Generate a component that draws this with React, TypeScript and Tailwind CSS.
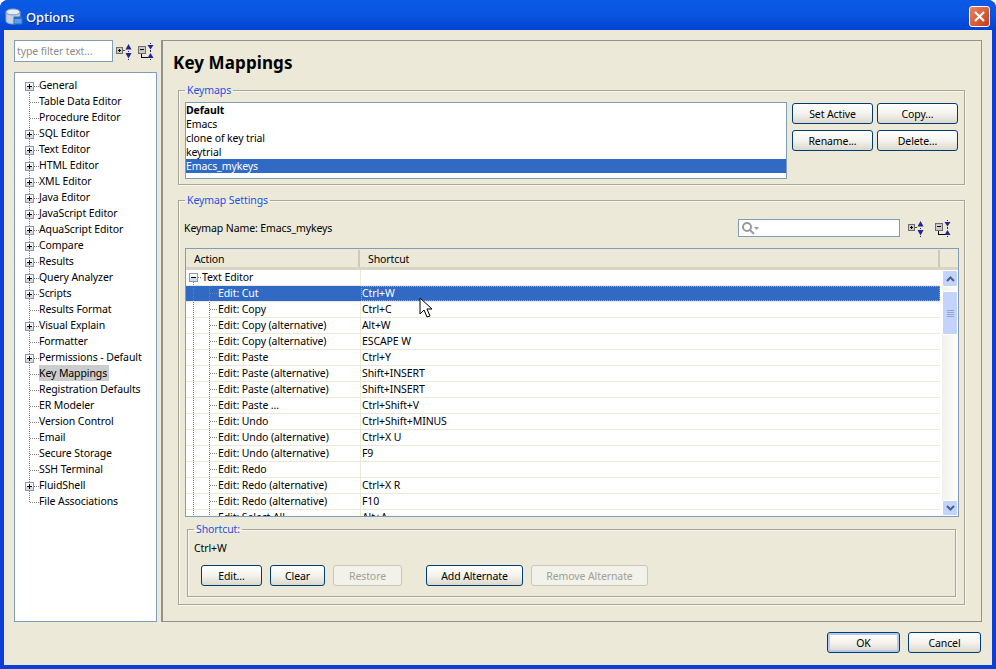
import React from 'react';

const treeItems: [string, boolean][] = [
  ['General', true],
  ['Table Data Editor', false],
  ['Procedure Editor', false],
  ['SQL Editor', true],
  ['Text Editor', true],
  ['HTML Editor', true],
  ['XML Editor', true],
  ['Java Editor', true],
  ['JavaScript Editor', true],
  ['AquaScript Editor', true],
  ['Compare', true],
  ['Results', true],
  ['Query Analyzer', true],
  ['Scripts', true],
  ['Results Format', false],
  ['Visual Explain', true],
  ['Formatter', false],
  ['Permissions - Default', true],
  ['Key Mappings', false],
  ['Registration Defaults', false],
  ['ER Modeler', false],
  ['Version Control', false],
  ['Email', false],
  ['Secure Storage', false],
  ['SSH Terminal', false],
  ['FluidShell', true],
  ['File Associations', false],
];

const rows: [string, string][] = [
  ['Edit: Cut', 'Ctrl+W'],
  ['Edit: Copy', 'Ctrl+C'],
  ['Edit: Copy (alternative)', 'Alt+W'],
  ['Edit: Copy (alternative)', 'ESCAPE W'],
  ['Edit: Paste', 'Ctrl+Y'],
  ['Edit: Paste (alternative)', 'Shift+INSERT'],
  ['Edit: Paste (alternative)', 'Shift+INSERT'],
  ['Edit: Paste ...', 'Ctrl+Shift+V'],
  ['Edit: Undo', 'Ctrl+Shift+MINUS'],
  ['Edit: Undo (alternative)', 'Ctrl+X U'],
  ['Edit: Undo (alternative)', 'F9'],
  ['Edit: Redo', ''],
  ['Edit: Redo (alternative)', 'Ctrl+X R'],
  ['Edit: Redo (alternative)', 'F10'],
  ['Edit: Select All', 'Alt+A'],
];

const ExpanderBox = ({ x, y, open }: { x: number; y: number; open: boolean }) => (
  <g shapeRendering="crispEdges">
    <rect x={x + 0.5} y={y + 0.5} width="8" height="8" fill="#d5dbe3" stroke="#7f9db9" />
    <rect x={x + 1} y={y + 1} width="7" height="4" fill="#f7f8fa" />
    <rect x={x + 2} y={y + 4} width="5" height="1" fill="#000" />
    {!open && <rect x={x + 4} y={y + 2} width="1" height="5" fill="#000" />}
  </g>
);

const SideGutter = ({ expandable, first, last }: { expandable: boolean; first: boolean; last: boolean }) => (
  <svg width="24" height="16" className="shrink-0">
    <g stroke="#808080" strokeDasharray="1 1" shapeRendering="crispEdges">
      <line x1="14.5" y1={first ? 9 : 0} x2="14.5" y2={last ? 9 : 16} />
      <line x1="15" y1="9.5" x2="24" y2="9.500" />
    </g>
    {expandable && <ExpanderBox x={10} y={5} open={false} />}
  </svg>
);

const ActionGutter = ({ root }: { root?: boolean }) => (
  <svg width="32" height="16" className="shrink-0">
    <g stroke="#808080" strokeDasharray="1 1" shapeRendering="crispEdges">
      {root ? (
        <>
          <line x1="7.5" y1="8" x2="7.5" y2="16" />
          <line x1="8" y1="7.5" x2="16" y2="7.500" />
        </>
      ) : (
        <>
          <line x1="7.5" y1="0" x2="7.5" y2="16" />
          <line x1="23.5" y1="0" x2="23.5" y2="16" />
          <line x1="24" y1="7.5" x2="32" y2="7.500" />
        </>
      )}
    </g>
    {root && <ExpanderBox x={3} y={3} open />}
  </svg>
);

const ExpandAllIcon = () => (
  <svg width="18" height="18" viewBox="0 0 18 18" className="shrink-0">
    <g shapeRendering="crispEdges">
      <rect x="0.5" y="5.5" width="6" height="6" fill="#c8c8c8" stroke="#6e6e6e" />
      <rect x="2" y="8" width="3" height="1" fill="#000" />
      <rect x="3" y="7" width="1" height="3" fill="#000" />
      <rect x="7" y="8" width="2" height="1" fill="#444" />
      <rect x="12" y="9" width="1" height="1" fill="#23238e" />
      <rect x="12" y="17" width="1" height="1" fill="#23238e" />
    </g>
    <path d="M12.5 2L15.500 7.500H9.500z" fill="#23238e" />
    <path d="M9.500 11H15.500L12.500 16.500z" fill="#23238e" />
  </svg>
);

const CollapseAllIcon = () => (
  <svg width="18" height="18" viewBox="0 0 18 18" className="shrink-0">
    <g shapeRendering="crispEdges">
      <rect x="0.5" y="4.5" width="7" height="7" fill="#c8c8c8" stroke="#6e6e6e" />
      <rect x="2" y="7" width="4" height="1" fill="#000" />
      <path d="M3 12h1v3h6v1H3z" fill="#000" />
      <rect x="12" y="1" width="1" height="1" fill="#23238e" />
      <rect x="12" y="8" width="1" height="2" fill="#23238e" />
      <rect x="12" y="17" width="1" height="1" fill="#23238e" />
    </g>
    <path d="M9.500 3H15.500L12.500 7.500z" fill="#23238e" />
    <path d="M12.500 11L15.500 16H9.500z" fill="#23238e" />
  </svg>
);

const XpButton = ({ label, w, disabled, focus }: { label: string; w: string; disabled?: boolean; focus?: boolean }) => (
  <div
    className={`${w} h-[21px] flex items-center justify-center rounded-[3px] border ${
      disabled
        ? 'border-[#c9c7ba] bg-[#f2f1ea] text-[#a1a192]'
        : focus
          ? 'border-[#003c74] bg-gradient-to-b from-white via-[#f4f3ee] to-[#dcd8cc] text-black shadow-[inset_0_0_0_2px_#b4c8f0]'
          : 'border-[#003c74] bg-gradient-to-b from-white via-[#f4f3ee] to-[#dcd8cc] text-black'
    }`}
  >
    {label}
  </div>
);

const legendClass = 'ml-[6px] px-[2px] h-[14px] leading-[14px] text-[#1e50e0]';
const fieldsetClass = 'border border-[#a5a598] shadow-[inset_1px_1px_0_#f8f7f2,1px_1px_0_#f8f7f2]';

const App = () => {
  return (
    <div
      className="relative w-[996px] h-[669px] flex flex-col overflow-hidden rounded-t-lg bg-[#0a3fd8] text-[10.5px] leading-[14px] tracking-[-0.1px] text-black"
      style={{ fontFamily: '"Noto Sans", "DejaVu Sans", sans-serif' }}
    >
      {/* Title bar */}
      <div className="h-[30px] shrink-0 flex items-center pl-[5px] pr-[6px] bg-gradient-to-b from-[#0a5ae6] via-[#0a55e0] to-[#0342d0]">
        <svg width="18" height="18" viewBox="0 0 18 18" className="shrink-0 mt-[3px]">
          <ellipse cx="8" cy="4" rx="7" ry="3" fill="#e8eef8" stroke="#8da2c6" />
          <path d="M1 4v9c0 1.600 3 3 7 3s7-1.400 7-3V4c0 1.600-3 3-7 3S1 5.600 1 4z" fill="#c4d0e4" stroke="#8da2c6" />
          <rect x="9" y="9" width="8" height="7" fill="#5d9ee8" stroke="#2b6cc0" />
          <rect x="9" y="9" width="8" height="2" fill="#2b6cc0" />
        </svg>
        <span className="ml-[3px] mt-[4px] text-[13px] font-medium text-white [text-shadow:1px_1px_0_#0a2a90]">Options</span>
        <div className="ml-auto mt-[3px] w-[21px] h-[21px] rounded-[3px] border border-white bg-gradient-to-br from-[#e8835f] to-[#c63a12] flex items-center justify-center">
          <svg width="13" height="13" viewBox="0 0 13 13">
            <path d="M2 2l9 9M11 2l-9 9" stroke="#fff" strokeWidth="2.200" />
          </svg>
        </div>
      </div>

      {/* Dialog body */}
      <div className="mx-[4px] mb-[4px] flex-1 flex flex-col bg-[#ece9d8] min-h-0">
        <div className="flex pl-[10px] pt-[10px] gap-[4px]">
          {/* Left column */}
          <div className="w-[143px] shrink-0 flex flex-col">
            <div className="flex items-center h-[22px]">
              <div className="w-[99px] h-[22px] border border-[#7f9db9] bg-white pl-[2px] flex items-center text-[#8c8c8c]">
                type filter text...
              </div>
              <div className="ml-[3px]"><ExpandAllIcon /></div>
              <div className="ml-[4px]"><CollapseAllIcon /></div>
            </div>
            <div className="mt-[10px] h-[550px] border border-[#7f9db9] bg-white pt-[4px]">
              {treeItems.map(([name, expandable], i) => (
                <div key={name} className="h-[16px] flex items-center">
                  <SideGutter expandable={expandable} first={i === 0} last={i === treeItems.length - 1} />
                  <span className={name === 'Key Mappings' ? 'bg-[#cccccc] h-[16px] leading-[16px] pr-[2px]' : ''}>{name}</span>
                </div>
              ))}
            </div>
          </div>

          {/* Right panel */}
          <div className="w-[821px] h-[582px] border border-[#919191] border-l-2 px-[15px] shrink-0">
            <div className="h-[42px] pt-[11px] text-[17px] leading-[22px] tracking-[0.1px] font-bold -ml-[5px]">Key Mappings</div>

            <fieldset className={`${fieldsetClass} h-[102px] w-[787px]`}>
              <legend className={legendClass}>Keymaps</legend>
              <div className="flex mt-[5px] pl-[6px]">
                <div className="w-[602px] h-[77px] border border-[#7f9db9] bg-white">
                  <div className="h-[14px] font-bold">Default</div>
                  <div className="h-[14px]">Emacs</div>
                  <div className="h-[14px]">clone of key trial</div>
                  <div className="h-[14px]">keytrial</div>
                  <div className="h-[14px] bg-[#316ac5] text-white">Emacs_mykeys</div>
                </div>
                <div className="ml-[5px] pt-px grid grid-cols-[81px_81px] gap-x-[4px] gap-y-[6px] content-start">
                  <XpButton label="Set Active" w="w-[81px]" />
                  <XpButton label="Copy..." w="w-[81px]" />
                  <XpButton label="Rename..." w="w-[81px]" />
                  <XpButton label="Delete..." w="w-[81px]" />
                </div>
              </div>
            </fieldset>

            <fieldset className={`${fieldsetClass} mt-[8px] h-[412px] w-[787px]`}>
              <legend className={legendClass}>Keymap Settings</legend>
              <div className="mt-[12px] pl-[5px] h-[18px] flex items-center">
                <span>Keymap Name: Emacs_mykeys</span>
                <div className="ml-auto w-[162px] h-[18px] border border-[#7f9db9] bg-white flex items-center pl-[2px]">
                  <svg width="18" height="14" viewBox="0 0 18 14">
                    <circle cx="6" cy="6" r="4" fill="none" stroke="#9a9a9a" strokeWidth="2" />
                    <path d="M9 9l4 4" stroke="#9a9a9a" strokeWidth="2" />
                    <path d="M13 6h5l-2.500 3z" fill="#9a9a9a" />
                  </svg>
                </div>
                <div className="ml-[8px]"><ExpandAllIcon /></div>
                <div className="ml-[9px] mr-[11px]"><CollapseAllIcon /></div>
              </div>

              {/* Key binding table */}
              <div className="mt-[11px] ml-[6px] w-[774px] h-[269px] border border-[#7f9db9] bg-white overflow-hidden flex flex-col">
                <div className="h-[21px] shrink-0 flex bg-[#ece9d8] border-b-[3px] border-[#d8d4c4] pt-px">
                  <div className="w-[174px] pl-[8px] flex items-center border-r-2 border-r-[#cdcabb]">Action</div>
                  <div className="w-[580px] pl-[8px] flex items-center border-r-2 border-r-[#cdcabb]">Shortcut</div>
                </div>
                <div className="flex flex-1 min-h-0">
                  <div className="w-[756px] shrink-0 overflow-hidden pr-[2px]">
                    <div className="h-[16px] flex border-b border-[#ece9d8]">
                      <div className="w-[175px] shrink-0 flex border-r border-[#ece9d8]">
                        <ActionGutter root />
                        <span className="-ml-[16px]">Text Editor</span>
                      </div>
                    </div>
                    {rows.map(([action, key], i) => {
                      const sel = i === 0;
                      return (
                        <div key={i} className={`h-[16px] flex border-b border-[#ece9d8] ${sel ? 'bg-[#316ac5] text-white' : ''}`}>
                          <div className={`w-[175px] shrink-0 flex border-r ${sel ? 'border-[#316ac5]' : 'border-[#ece9d8]'}`}>
                            <ActionGutter />
                            <span>{action}</span>
                          </div>
                          <div className={`flex-1 pl-[1px] ${sel ? 'outline-1 -outline-offset-1 outline-dotted outline-[#c9a25a]' : ''}`}>{key}</div>
                        </div>
                      );
                    })}
                  </div>
                  {/* Scrollbar */}
                  <div className="w-[16px] shrink-0 flex flex-col bg-gradient-to-r from-[#f3f1ec] to-[#fdfdfa]">
                    <div className="h-[17px] shrink-0 rounded-[2px] border border-white bg-[#c3d3fb] flex items-center justify-center">
                      <svg width="9" height="6" viewBox="0 0 9 6"><path d="M1 5l3.500-3.500L8 5" fill="none" stroke="#4d6185" strokeWidth="2" /></svg>
                    </div>
                    <div className="mt-[4px] h-[44px] shrink-0 rounded-[2px] border border-white bg-[#c3d3fb] flex flex-col items-center justify-center gap-px">
                      <div className="w-[7px] h-px bg-[#8fa6dc]" />
                      <div className="w-[7px] h-px bg-[#8fa6dc]" />
                      <div className="w-[7px] h-px bg-[#8fa6dc]" />
                      <div className="w-[7px] h-px bg-[#8fa6dc]" />
                    </div>
                    <div className="mt-auto h-[16px] shrink-0 rounded-[2px] border border-white bg-[#c3d3fb] flex items-center justify-center">
                      <svg width="9" height="6" viewBox="0 0 9 6"><path d="M1 1l3.500 3.500L8 1" fill="none" stroke="#4d6185" strokeWidth="2" /></svg>
                    </div>
                  </div>
                </div>
              </div>

              <fieldset className={`${fieldsetClass} mt-[5px] ml-[8px] w-[769px] h-[75px]`}>
                <legend className={legendClass}>Shortcut:</legend>
                <div className="pl-[6px] mt-[5px]">Ctrl+W</div>
                <div className="flex pl-[13px] mt-[10px] gap-[8px]">
                  <XpButton label="Edit..." w="w-[61px]" />
                  <XpButton label="Clear" w="w-[55px]" />
                  <XpButton label="Restore" w="w-[69px]" disabled />
                  <div className="w-[8px]" />
                  <XpButton label="Add Alternate" w="w-[97px]" />
                  <XpButton label="Remove Alternate" w="w-[117px]" disabled />
                </div>
              </fieldset>
            </fieldset>
          </div>
        </div>

        {/* Footer buttons */}
        <div className="mt-[10px] flex justify-end gap-[8px] pr-[11px]">
          <XpButton label="OK" w="w-[73px]" focus />
          <XpButton label="Cancel" w="w-[73px]" />
        </div>
      </div>

      {/* Mouse pointer over the table */}
      <svg width="14" height="22" viewBox="0 0 14 22" className="absolute left-[419px] top-[297px]">
        <path d="M1 1v16l4-4 3 7 3-1-3-7h5z" fill="#fff" stroke="#000" />
      </svg>
    </div>
  );
};

export default App;
